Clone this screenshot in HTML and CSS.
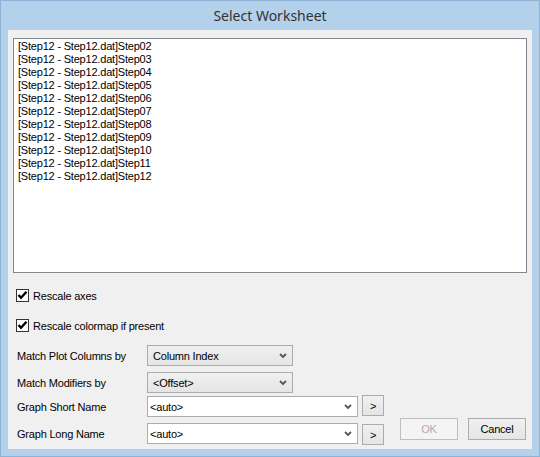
FILE: index.html
```html
<!DOCTYPE html>
<html>
<head>
<meta charset="utf-8">
<link rel="stylesheet" href="styles.css">
</head>
<body>
<div class="window">
  <div class="titlebar">Select Worksheet</div>
  <div class="client">
    <div class="listbox">
      <div class="item">[Step12 - Step12.dat]Step02</div>
      <div class="item">[Step12 - Step12.dat]Step03</div>
      <div class="item">[Step12 - Step12.dat]Step04</div>
      <div class="item">[Step12 - Step12.dat]Step05</div>
      <div class="item">[Step12 - Step12.dat]Step06</div>
      <div class="item">[Step12 - Step12.dat]Step07</div>
      <div class="item">[Step12 - Step12.dat]Step08</div>
      <div class="item">[Step12 - Step12.dat]Step09</div>
      <div class="item">[Step12 - Step12.dat]Step10</div>
      <div class="item">[Step12 - Step12.dat]Step11</div>
      <div class="item">[Step12 - Step12.dat]Step12</div>
    </div>

    <label class="check check-first">
      <span class="box"><svg width="11" height="11" viewBox="0 0 11 11"><polyline points="1.5,5 4,7.8 9.5,1.8" fill="none" stroke="#000" stroke-width="2.4"/></svg></span>
      <span>Rescale axes</span>
    </label>
    <label class="check check-second">
      <span class="box"><svg width="11" height="11" viewBox="0 0 11 11"><polyline points="1.5,5 4,7.8 9.5,1.8" fill="none" stroke="#000" stroke-width="2.4"/></svg></span>
      <span>Rescale colormap if present</span>
    </label>

    <div class="form">
      <div class="lbl r1">Match Plot Columns by</div>
      <div class="drop r1">
        <span>Column Index</span>
        <svg class="chev" width="8" height="6" viewBox="0 0 8 6"><polyline points="1,1 4,4 7,1" fill="none" stroke="#555" stroke-width="1.8"/></svg>
      </div>

      <div class="lbl r2">Match Modifiers by</div>
      <div class="drop r2">
        <span>&lt;Offset&gt;</span>
        <svg class="chev" width="8" height="6" viewBox="0 0 8 6"><polyline points="1,1 4,4 7,1" fill="none" stroke="#555" stroke-width="1.8"/></svg>
      </div>

      <div class="lbl r3">Graph Short Name</div>
      <div class="edit r3">
        <span>&lt;auto&gt;</span>
        <svg class="chev" width="8" height="6" viewBox="0 0 8 6"><polyline points="1,1 4,4 7,1" fill="none" stroke="#555" stroke-width="1.8"/></svg>
      </div>
      <div class="more r3 b3">&gt;</div>

      <div class="lbl r4">Graph Long Name</div>
      <div class="edit r4">
        <span>&lt;auto&gt;</span>
        <svg class="chev" width="8" height="6" viewBox="0 0 8 6"><polyline points="1,1 4,4 7,1" fill="none" stroke="#555" stroke-width="1.8"/></svg>
      </div>
      <div class="more r4 b4">&gt;</div>

      <div class="btn ok">OK</div>
      <div class="btn cancel">Cancel</div>
    </div>
  </div>
</div>
</body>
</html>
```
FILE: styles.css
```css
html, body {
  margin: 0;
  padding: 0;
  background: #b3d1eb;
}
body {
  font-family: "Liberation Sans", Arial, sans-serif;
  font-size: 11px;
  letter-spacing: -0.2px;
  color: #000;
}
.window {
  width: 540px;
  height: 457px;
  box-sizing: border-box;
  background: #b3d1eb;
  border: 1px solid #8db2d6;
  display: flex;
  flex-direction: column;
}
.titlebar {
  height: 29px;
  display: flex;
  align-items: center;
  justify-content: center;
  font-family: "Noto Sans", "Open Sans", sans-serif;
  font-size: 14px;
  letter-spacing: 0;
  color: #333;
}
.client {
  margin: 0 7px 0 7px;
  height: 419px;
  background: #f0f0f0;
  box-sizing: border-box;
  padding: 8px 5px 0 5px;
  display: flex;
  flex-direction: column;
}
.listbox {
  height: 235px;
  box-sizing: border-box;
  border: 1px solid #828790;
  background: #fff;
  padding: 1px 4px;
}
.item {
  height: 13px;
  line-height: 13px;
  white-space: nowrap;
}
.check {
  display: flex;
  align-items: center;
  height: 13px;
  margin-left: 3px;
}
.check-first { margin-top: 16px; }
.check-second { margin-top: 17px; }
.box {
  width: 13px;
  height: 13px;
  box-sizing: border-box;
  border: 1px solid #333;
  background: #fff;
  display: flex;
  align-items: center;
  justify-content: center;
  margin-right: 4px;
}
.box svg { display: block; }
.form {
  margin-top: 13px;
  display: grid;
  grid-template-columns: 130px 211px 4px 22px 16px 58px 10px 58px;
  grid-template-rows: 21px 21px 21px 21px;
  margin-left: 4px;
}
.r1 { grid-row: 1; }
.r2 { grid-row: 2; margin-top: 6px; }
.r3 { grid-row: 3; margin-top: 9px; }
.r4 { grid-row: 4; margin-top: 15px; }
.lbl {
  grid-column: 1;
  display: flex;
  align-items: center;
  height: 21px;
  white-space: nowrap;
}
.drop {
  grid-column: 2;
  width: 146px;
  height: 21px;
  box-sizing: border-box;
  border: 1px solid #acacac;
  background: linear-gradient(#f0f0f0, #e5e5e5);
  display: flex;
  align-items: center;
  justify-content: space-between;
  padding: 0 5px 0 5px;
}
.edit {
  grid-column: 2;
  width: 211px;
  height: 21px;
  box-sizing: border-box;
  border: 1px solid #abadb3;
  background: #fff;
  display: flex;
  align-items: center;
  justify-content: space-between;
  padding: 0 5px 0 2px;
}
.chev { display: block; }
.more {
  grid-column: 4;
  width: 22px;
  height: 21px;
  box-sizing: border-box;
  border: 1px solid #acacac;
  background: linear-gradient(#f0f0f0, #e5e5e5);
  display: flex;
  align-items: center;
  justify-content: center;
}
.b3 { margin-top: 8px; }
.b4 { margin-top: 16px; }
.btn {
  grid-row: 4;
  height: 22px;
  box-sizing: border-box;
  display: flex;
  align-items: center;
  justify-content: center;
  margin-top: 10px;
}
.ok {
  grid-column: 6;
  border: 1px solid #bfbfbf;
  background: #f4f4f4;
  color: #adadad;
}
.cancel {
  grid-column: 8;
  border: 1px solid #acacac;
  background: linear-gradient(#f0f0f0, #e5e5e5);
}
```
